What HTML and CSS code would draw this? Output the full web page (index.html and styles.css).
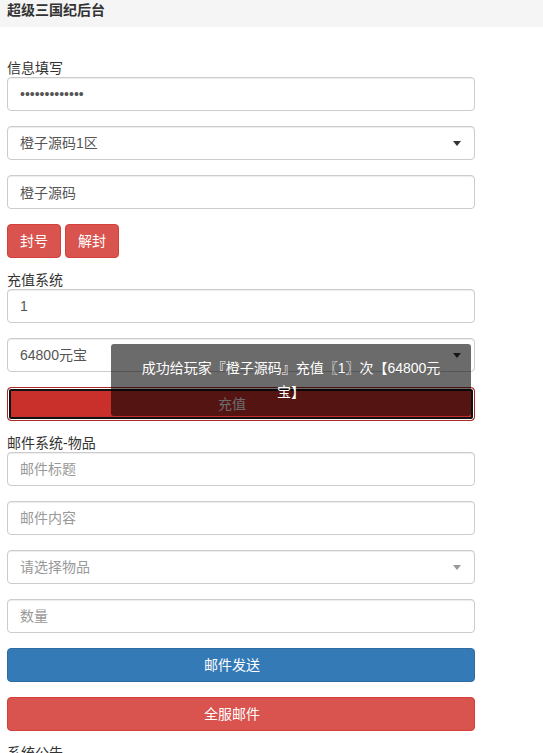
FILE: index.html
```html
<!DOCTYPE html>
<html lang="zh-CN">
<head>
    <meta charset="UTF-8">
    <meta name="viewport" content="width=device-width, initial-scale=1.0">
    <title>超级三国纪后台</title>
    <link rel="stylesheet" href="styles.css">
</head>
<body>
    <div class="topbar">超级三国纪后台</div>

    <div class="main">
        <div class="section">
            <label class="title">信息填写</label>
            <div class="stack">
                <input class="form-control" type="password" value="1234567890123">
                <div class="select-box">
                    <span>橙子源码1区</span>
                    <span class="caret"></span>
                </div>
                <input class="form-control" type="text" value="橙子源码">
                <div class="btn-row">
                    <button class="btn btn-danger">封号</button>
                    <button class="btn btn-danger">解封</button>
                </div>
            </div>
        </div>

        <div class="section">
            <label class="title">充值系统</label>
            <div class="stack">
                <input class="form-control" type="text" value="1">
                <div class="select-box">
                    <span>64800元宝</span>
                    <span class="caret"></span>
                </div>
                <button class="btn btn-danger btn-block is-focused">充值</button>
            </div>
        </div>

        <div class="section">
            <label class="title">邮件系统-物品</label>
            <div class="stack">
                <input class="form-control" type="text" placeholder="邮件标题">
                <input class="form-control" type="text" placeholder="邮件内容">
                <div class="select-box is-empty">
                    <span>请选择物品</span>
                    <span class="caret"></span>
                </div>
                <input class="form-control" type="text" placeholder="数量">
                <button class="btn btn-primary btn-block">邮件发送</button>
                <button class="btn btn-danger btn-block">全服邮件</button>
            </div>
        </div>

        <div class="section">
            <label class="title">系统公告</label>
            <div class="stack">
                <textarea class="form-control" rows="3" placeholder="公告内容"></textarea>
                <button class="btn btn-primary btn-block">发送公告</button>
            </div>
        </div>
    </div>

    <div class="toast">成功给玩家『橙子源码』充值〖1〗次【64800元宝】</div>
</body>
</html>
```

FILE: styles.css
```css
body {
    margin: 0;
    background-color: #fff;
    color: #333;
    font-family: "Liberation Sans", "Noto Sans CJK SC", sans-serif;
    font-size: 14px;
    line-height: 20px;
    position: relative;
}

.topbar {
    height: 27px;
    padding: 0 7px;
    background-color: #f5f5f5;
    font-weight: bold;
    line-height: 21px;
}

.main {
    width: 468px;
    padding: 32px 7px 40px;
    display: flex;
    flex-direction: column;
    gap: 13px;
}

.title {
    display: block;
    line-height: 18px;
    font-weight: normal;
}

.stack {
    display: flex;
    flex-direction: column;
    gap: 15px;
}

.form-control {
    box-sizing: border-box;
    display: block;
    width: 100%;
    height: 34px;
    margin: 0;
    padding: 6px 12px;
    font-family: inherit;
    font-size: 14px;
    line-height: 20px;
    color: #555;
    background-color: #fff;
    border: 1px solid #ccc;
    border-radius: 4px;
    box-shadow: inset 0 1px 1px rgba(0, 0, 0, .075);
    outline: none;
}

textarea.form-control {
    height: auto;
    resize: none;
}

.form-control::placeholder {
    color: #999;
}

.select-box {
    box-sizing: border-box;
    height: 34px;
    padding: 6px 13px 6px 12px;
    display: flex;
    align-items: center;
    justify-content: space-between;
    color: #555;
    border: 1px solid #ccc;
    border-radius: 4px;
    box-shadow: inset 0 1px 1px rgba(0, 0, 0, .075);
}

.caret {
    width: 0;
    height: 0;
    border-style: solid;
    border-width: 5px 4px 0 4px;
    border-color: #333 transparent transparent transparent;
}

.select-box.is-empty {
    color: #999;
}

.select-box.is-empty .caret {
    border-top-color: #999;
}

.btn-row {
    display: flex;
    gap: 4px;
}

.btn {
    box-sizing: border-box;
    height: 34px;
    margin: 0;
    padding: 6px 12px;
    font-family: inherit;
    font-size: 14px;
    line-height: 20px;
    color: #fff;
    border: 1px solid transparent;
    border-radius: 4px;
    cursor: pointer;
}

.btn-block {
    display: block;
    width: 100%;
    padding-right: 30px;
}

.btn-danger {
    background-color: #d9534f;
    border-color: #d43f3a;
}

.btn-primary {
    background-color: #337ab7;
    border-color: #2e6da4;
}

.btn-danger.is-focused {
    background-color: #c9302c;
    border-color: #ac2925;
    box-shadow: inset 0 0 0 1px #fff, inset 0 0 0 3px #111;
}

.toast {
    position: absolute;
    left: 111px;
    top: 344px;
    box-sizing: border-box;
    width: 360px;
    height: 72px;
    padding: 12px 25px;
    background-color: rgba(0, 0, 0, .58);
    border-radius: 3px;
    color: #fff;
    line-height: 24px;
    text-align: center;
}
```
